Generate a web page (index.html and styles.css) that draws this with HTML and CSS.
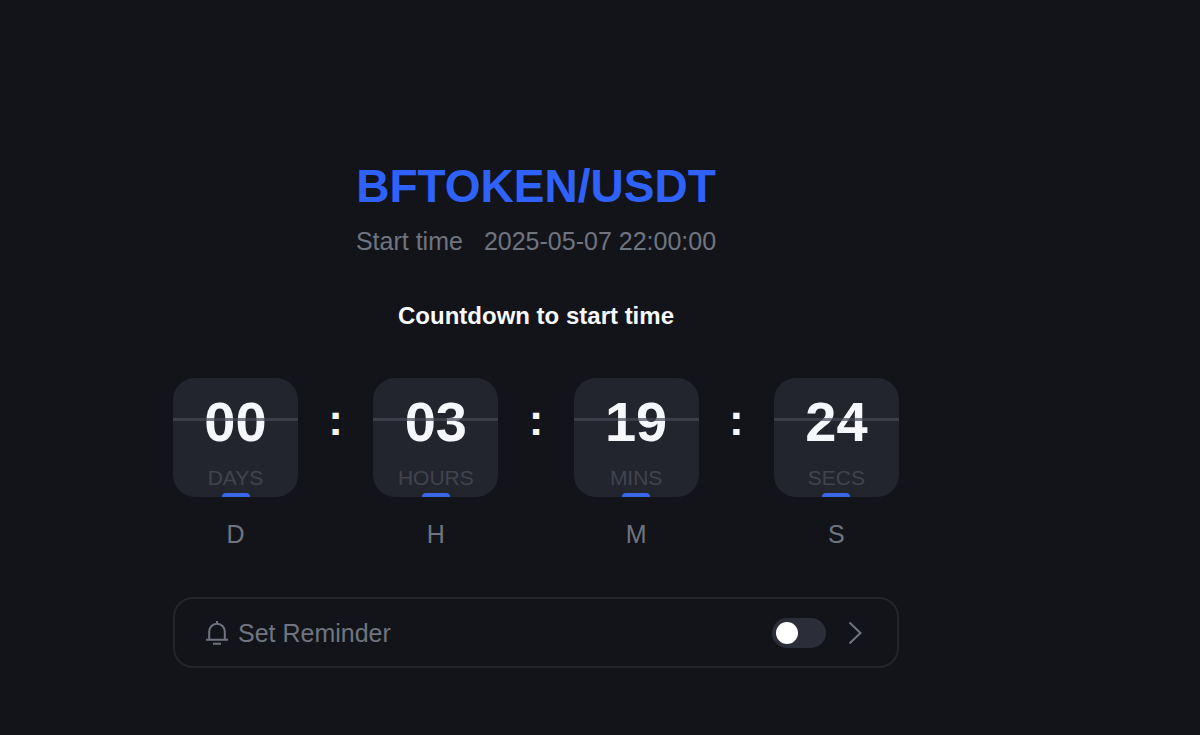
FILE: index.html
```html
<!DOCTYPE html>
<html lang="en">
<head>
    <meta charset="utf-8">
    <meta name="viewport" content="width=device-width, initial-scale=1">
    <title>BFTOKEN/USDT</title>
    <link rel="stylesheet" href="styles.css">
</head>
<body>
<main class="page">
    <section class="panel">
        <h1 class="pair">BFTOKEN/USDT</h1>
        <p class="start">
            <span>Start time</span>
            <time datetime="2025-05-07T22:00:00">2025-05-07 22:00:00</time>
        </p>
        <h2 class="subtitle">Countdown to start time</h2>

        <div class="countdown">
            <div class="unit">
                <div class="card"><span class="num">00</span><span class="label">DAYS</span></div>
                <span class="short">D</span>
            </div>
            <span class="colon">:</span>
            <div class="unit">
                <div class="card"><span class="num">03</span><span class="label">HOURS</span></div>
                <span class="short">H</span>
            </div>
            <span class="colon">:</span>
            <div class="unit">
                <div class="card"><span class="num">19</span><span class="label">MINS</span></div>
                <span class="short">M</span>
            </div>
            <span class="colon">:</span>
            <div class="unit">
                <div class="card"><span class="num">24</span><span class="label">SECS</span></div>
                <span class="short">S</span>
            </div>
        </div>

        <div class="reminder">
            <svg class="bell" viewBox="0 0 24 24" aria-hidden="true">
                <path d="M4.2 18.5V10.5a7.8 7.8 0 0 1 15.6 0v8M1 18.7h22M8 22.8h8M12 0V3"/>
            </svg>
            <label class="reminder_text" for="remind">Set Reminder</label>
            <input class="switch" type="checkbox" role="switch" id="remind">
            <a class="more" href="#" aria-label="Reminder settings">
                <svg viewBox="0 0 14 24" aria-hidden="true"><path d="M1.5 1.5L12.5 12L1.5 22.5"/></svg>
            </a>
        </div>
    </section>
</main>
</body>
</html>
```
FILE: styles.css
```css
*{box-sizing: border-box;}
body,h1,h2,p{margin: 0;padding: 0;}
body {
    background: #131419;
    color: #6f7480;
    font-family: "Liberation Sans", Arial, Helvetica, sans-serif;
    font-size: 25px;
    line-height: 30px;
}

.page{padding: 160px 128px 64px 0;}
.panel{max-width: 726px; margin: 0 auto; text-align: center;}

.pair{color: #2f62fb; font-size: 46px; line-height: 52px;}
.start{display: flex; justify-content: center; gap: 21px; margin-top: 14px;}
.subtitle{margin-top: 45px; color: #f8f9fc; font-size: 24px;}

/* flip clock */
.countdown{
    display: flex; justify-content: space-between;
    margin-top: 47px;
}
.unit{width: 125px;}
.card{
    display: flex; flex-direction: column; align-items: center;
    position: relative; height: 119px; padding-top: 16px;
    border-radius: 22px; background: #23252e; overflow: hidden;
}
/* fold line across the digits */
.card::before{
    content: ""; position: absolute; left: 0; right: 0; top: 40px;
    height: 3px; background: rgba(70,73,86,0.7);
}
/* blue tab on the bottom edge */
.card::after{
    content: ""; position: absolute; left: 50%; bottom: 0;
    width: 28px; height: 4px; margin-left: -14px;
    border-radius: 4px 4px 0 0; background: #3a67e8;
}
.num{color: #f5f7fa; font-size: 56px; font-weight: bold; line-height: 56px;}
.label{margin-top: 13px; color: #41434e; font-size: 21px;}
.short{display: block; margin-top: 22px;}
.colon{padding-top: 16px; color: #f5f7fa; font-size: 44px; font-weight: bold; line-height: 52px;}

/* reminder bar */
.reminder{
    display: flex; align-items: center;
    height: 71px; margin-top: 48px; padding: 0 35px 0 30px;
    border: 2px solid #23252b; border-radius: 20px;
}
.bell{width: 24px; height: 24px; margin-right: 9px;}
.bell path,.more path{fill: none; stroke: #6f7480; stroke-width: 2;}
.more svg{display: block; width: 14px; height: 24px;}
.more{margin-left: 22px;}
.switch{
    appearance: none; width: 54px; height: 30px; margin: 0 0 0 auto;
    padding: 4px; border-radius: 15px; background: #2b2e39; cursor: pointer;
}
.switch::before{
    content: ""; display: block; width: 22px; height: 22px;
    border-radius: 50%; background: #fff;
}
.switch:checked{background: #2f62fb;}
.switch:checked::before{margin-left: auto;}
```
